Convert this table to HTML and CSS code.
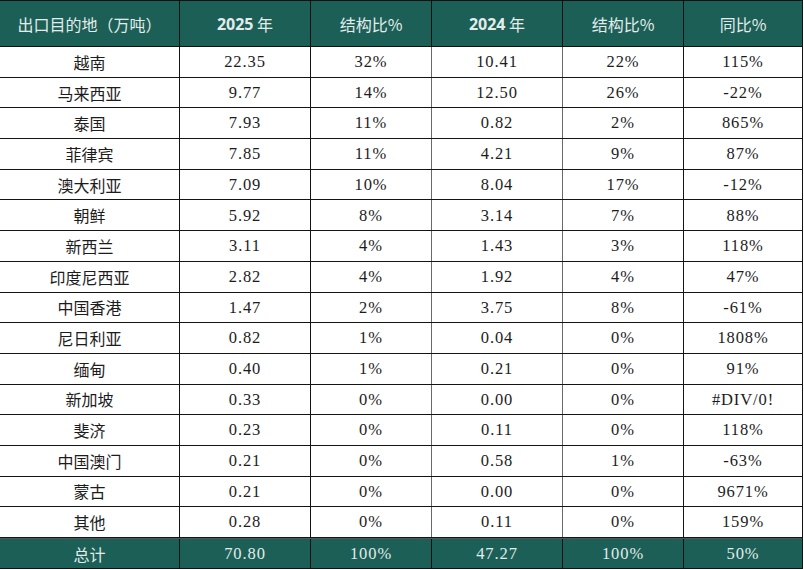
FILE: index.html
```html
<!DOCTYPE html>
<html lang="zh-CN">
<head>
<meta charset="utf-8">
<title>出口目的地</title>
<link rel="stylesheet" href="styles.css">
</head>
<body>
<div class="sheet">
  <div class="row head">
    <div class="cell">出口目的地（万吨）</div>
    <div class="cell"><b class="yr">2025</b>&nbsp;年</div>
    <div class="cell">结构比%</div>
    <div class="cell"><b class="yr">2024</b>&nbsp;年</div>
    <div class="cell">结构比%</div>
    <div class="cell">同比%</div>
  </div>
  <div class="row"><div class="cell name">越南</div><div class="cell num">22.35</div><div class="cell num">32%</div><div class="cell num">10.41</div><div class="cell num">22%</div><div class="cell num">115%</div></div>
  <div class="row"><div class="cell name">马来西亚</div><div class="cell num">9.77</div><div class="cell num">14%</div><div class="cell num">12.50</div><div class="cell num">26%</div><div class="cell num">-22%</div></div>
  <div class="row"><div class="cell name">泰国</div><div class="cell num">7.93</div><div class="cell num">11%</div><div class="cell num">0.82</div><div class="cell num">2%</div><div class="cell num">865%</div></div>
  <div class="row"><div class="cell name">菲律宾</div><div class="cell num">7.85</div><div class="cell num">11%</div><div class="cell num">4.21</div><div class="cell num">9%</div><div class="cell num">87%</div></div>
  <div class="row"><div class="cell name">澳大利亚</div><div class="cell num">7.09</div><div class="cell num">10%</div><div class="cell num">8.04</div><div class="cell num">17%</div><div class="cell num">-12%</div></div>
  <div class="row"><div class="cell name">朝鲜</div><div class="cell num">5.92</div><div class="cell num">8%</div><div class="cell num">3.14</div><div class="cell num">7%</div><div class="cell num">88%</div></div>
  <div class="row"><div class="cell name">新西兰</div><div class="cell num">3.11</div><div class="cell num">4%</div><div class="cell num">1.43</div><div class="cell num">3%</div><div class="cell num">118%</div></div>
  <div class="row"><div class="cell name">印度尼西亚</div><div class="cell num">2.82</div><div class="cell num">4%</div><div class="cell num">1.92</div><div class="cell num">4%</div><div class="cell num">47%</div></div>
  <div class="row"><div class="cell name">中国香港</div><div class="cell num">1.47</div><div class="cell num">2%</div><div class="cell num">3.75</div><div class="cell num">8%</div><div class="cell num">-61%</div></div>
  <div class="row"><div class="cell name">尼日利亚</div><div class="cell num">0.82</div><div class="cell num">1%</div><div class="cell num">0.04</div><div class="cell num">0%</div><div class="cell num">1808%</div></div>
  <div class="row"><div class="cell name">缅甸</div><div class="cell num">0.40</div><div class="cell num">1%</div><div class="cell num">0.21</div><div class="cell num">0%</div><div class="cell num">91%</div></div>
  <div class="row"><div class="cell name">新加坡</div><div class="cell num">0.33</div><div class="cell num">0%</div><div class="cell num">0.00</div><div class="cell num">0%</div><div class="cell num">#DIV/0!</div></div>
  <div class="row"><div class="cell name">斐济</div><div class="cell num">0.23</div><div class="cell num">0%</div><div class="cell num">0.11</div><div class="cell num">0%</div><div class="cell num">118%</div></div>
  <div class="row"><div class="cell name">中国澳门</div><div class="cell num">0.21</div><div class="cell num">0%</div><div class="cell num">0.58</div><div class="cell num">1%</div><div class="cell num">-63%</div></div>
  <div class="row"><div class="cell name">蒙古</div><div class="cell num">0.21</div><div class="cell num">0%</div><div class="cell num">0.00</div><div class="cell num">0%</div><div class="cell num">9671%</div></div>
  <div class="row"><div class="cell name">其他</div><div class="cell num">0.28</div><div class="cell num">0%</div><div class="cell num">0.11</div><div class="cell num">0%</div><div class="cell num">159%</div></div>
  <div class="row foot"><div class="cell name">总计</div><div class="cell num">70.80</div><div class="cell num">100%</div><div class="cell num">47.27</div><div class="cell num">100%</div><div class="cell num">50%</div></div>
</div>
</body>
</html>
```

FILE: styles.css
```css
* { box-sizing: border-box; }
html, body { margin: 0; padding: 0; background: #ffffff; }
body {
  font-family: "Noto Sans CJK SC", "Noto Sans", sans-serif;
  color: #1c1c1c;
}
.sheet {
  width: 803px;
  border-top: 1px solid #111;
  border-right: 1px solid #111;
}
.row {
  display: grid;
  grid-template-columns: 180px 131px 121px 131px 121px 118px;
  height: 30.6875px;
  border-bottom: 1px solid #141414;
}
.cell {
  display: flex;
  align-items: center;
  justify-content: center;
  border-right: 1px solid #141414;
  font-size: 16px;
  line-height: 1;
  white-space: nowrap;
}
.cell:last-child { border-right: none; }
.row > .cell:nth-child(3),
.row > .cell:nth-child(4) { border-right-color: #6a6a6a; }
.num {
  font-family: "Liberation Serif", "DejaVu Serif", serif;
  font-size: 16.5px;
  letter-spacing: 0.9px;
  padding-top: 1px;
}
.name { font-size: 16px; }
.head {
  height: 46px;
  background: #1b5f57;
  color: #e3ecea;
  border-bottom-color: #111;
}
.head .cell { font-size: 16px; }
.head > .cell:nth-child(n) { border-right-color: #111; }
.head > .cell:last-child { border-right: none; }
.yr { font-family: "Noto Sans", sans-serif; font-weight: 700; letter-spacing: 0; }
.foot {
  height: 31px;
  background: #1b5f57;
  color: #e3ecea;
  border-top: 1px solid #555;
  border-bottom: 1px solid #111;
  box-shadow: 0 2px 0 #d6d6d6;
}
.foot > .cell:nth-child(n) { border-right-color: #111; }
.foot > .cell:last-child { border-right: none; }
```
